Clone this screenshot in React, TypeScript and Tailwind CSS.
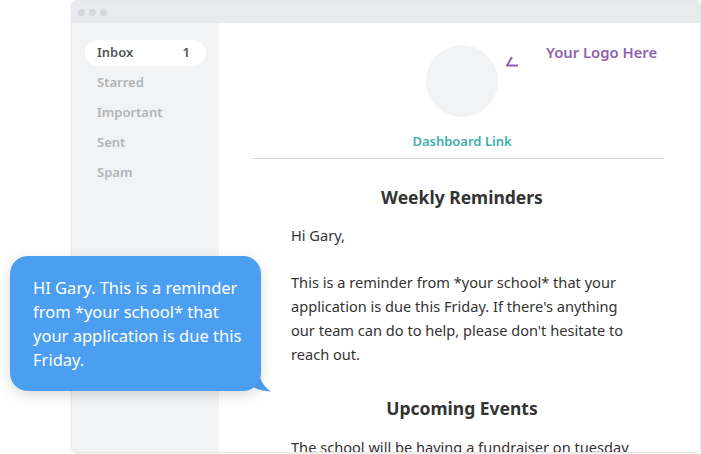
import React from "react";

export default function App() {
  const font = { fontFamily: '"Noto Sans", "Open Sans", sans-serif' };
  return (
    <div className="relative w-[701px] h-[454px] overflow-hidden bg-white" style={font}>
      <div className="pl-[71px]">
        <div className="w-[630px] h-[453px] rounded-[6px] border border-[#e4e6e9] shadow-[0_1px_3px_rgba(0,0,0,0.06)] overflow-hidden flex flex-col bg-white">
          <div className="h-[22px] bg-[#e8eaed] flex items-center gap-[4px] pl-[6px] shrink-0">
            <span className="w-[7px] h-[7px] rounded-full bg-[#d5d8dc]" />
            <span className="w-[7px] h-[7px] rounded-full bg-[#d5d8dc]" />
            <span className="w-[7px] h-[7px] rounded-full bg-[#d5d8dc]" />
          </div>
          <div className="flex flex-1 min-h-0">
            <div className="w-[147px] bg-[#f2f3f5] pt-[17px] px-[13px] text-[13px] font-semibold">
              <div className="h-[26px] mb-[4px] rounded-full bg-white flex items-center justify-between pl-3 pr-[16px] text-[#555]">
                <span>Inbox</span>
                <span>1</span>
              </div>
              {["Starred", "Important", "Sent", "Spam"].map((t) => (
                <div key={t} className="h-[26px] mb-[4px] flex items-center pl-3 text-[#b1b3b6]">
                  {t}
                </div>
              ))}
            </div>
            <div className="flex-1 relative">
              <div className="relative h-[95px] pt-[22px]">
                <div className="ml-[207px] w-[72px] h-[72px] rounded-full bg-[#f2f3f5]" />
                <svg className="absolute left-[287px] top-[33px]" width="13" height="11" viewBox="0 0 13 11">
                  <path d="M6 1 L1 9.5 H12" fill="none" stroke="#8e63ad" strokeWidth="2" />
                </svg>
                <div className="absolute left-[327px] top-[18px] text-[14.8px] font-semibold text-[#8e63ad]">
                  Your Logo Here
                </div>
              </div>
              <div className="mt-[14px] ml-[72px] w-[342px] text-center text-[13px] font-semibold leading-[18px] text-[#3eaea9]">
                Dashboard Link
              </div>
              <div className="mt-[8px] ml-[34px] w-[411px] h-px bg-[#d3d4d6]" />
              <div className="ml-[72px] w-[342px] text-[#333]">
                <div className="mt-[26px] text-center text-[17.5px] font-bold leading-[24px]">Weekly Reminders</div>
                <p className="mt-[14px] text-[14.6px] leading-[24px]">Hi Gary,</p>
                <p className="mt-[23px] text-[14.6px] leading-[24px]">
                  This is a reminder from *your school* that your application is due this Friday. If there's anything our team can do to help, please don't hesitate to reach out.
                </p>
                <div className="mt-[30px] text-center text-[17.5px] font-bold leading-[24px]">Upcoming Events</div>
                <p className="mt-[15px] text-[14.6px] leading-[24px] whitespace-nowrap">
                  The school will be having a fundraiser on tuesday
                </p>
              </div>
            </div>
          </div>
        </div>
      </div>
      <div className="absolute left-[10px] top-[256px] w-[251px] h-[135px]">
        <svg className="absolute left-[236px] top-[116px]" width="28" height="22" viewBox="0 0 28 22">
          <path d="M0 0 H13 C14 8 17 14 25 19.5 C17 19.5 10 17 6 14 Z" fill="#4c9ff0" />
        </svg>
        <div className="relative h-full rounded-[18px] bg-[#4c9ff0] shadow-[0_4px_14px_rgba(0,0,0,0.14)] pl-[23px] pr-[10px] pt-[20px] text-white text-[16.5px] leading-[24px]">
          HI Gary. This is a reminder from *your school* that your application is due this Friday.
        </div>
      </div>
    </div>
  );
}
